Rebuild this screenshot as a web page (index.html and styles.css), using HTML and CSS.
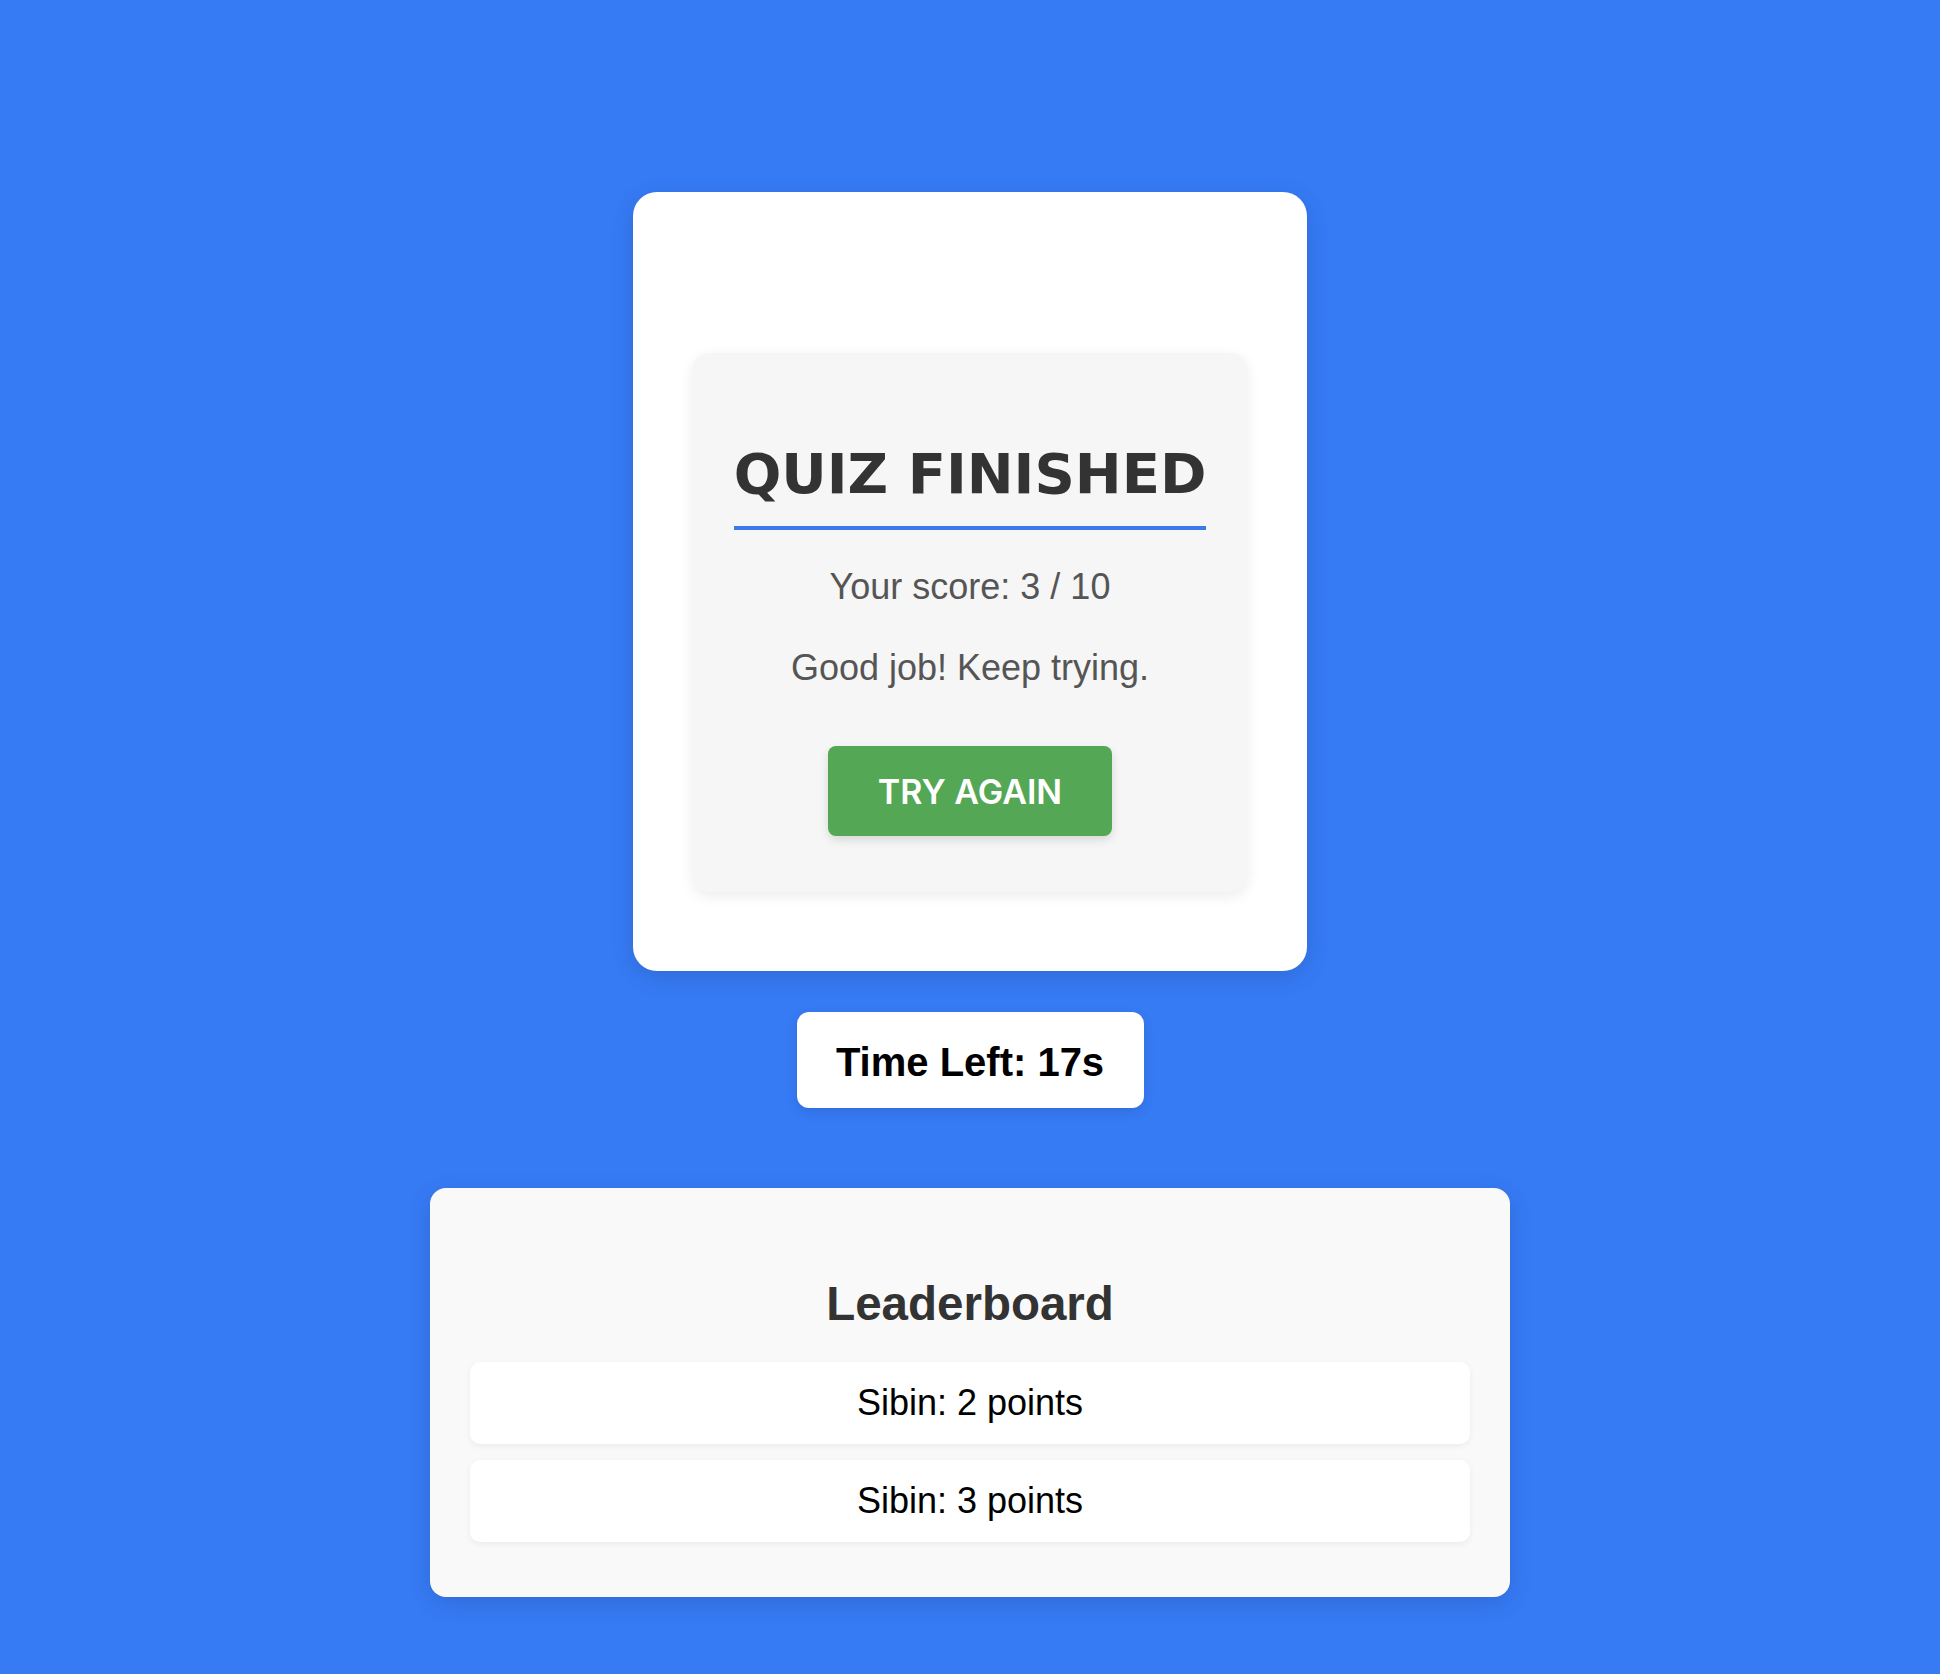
FILE: index.html
```html
<!DOCTYPE html>
<html lang="en">
<head>
<meta charset="utf-8">
<title>Quiz</title>
<link rel="stylesheet" href="styles.css">
</head>
<body>
<main class="page">
  <section class="quiz-card">
    <div class="result">
      <h2 class="result-title">QUIZ FINISHED</h2>
      <p class="score">Your score: 3 / 10</p>
      <p class="message">Good job! Keep trying.</p>
      <button class="retry" type="button">TRY AGAIN</button>
    </div>
  </section>
  <div class="timer">Time Left: 17s</div>
  <section class="leaderboard">
    <h2 class="leaderboard-title">Leaderboard</h2>
    <ul class="entries">
      <li class="entry">Sibin: 2 points</li>
      <li class="entry">Sibin: 3 points</li>
    </ul>
  </section>
</main>
</body>
</html>
```
FILE: styles.css
```css
html, body {
  margin: 0;
  padding: 0;
}
body {
  background: #367af4;
  font-family: "Liberation Sans", Arial, sans-serif;
  min-height: 1674px;
}
.page {
  display: flex;
  flex-direction: column;
  align-items: center;
  padding-top: 192px;
}
.quiz-card {
  box-sizing: border-box;
  width: 674px;
  background: #ffffff;
  border-radius: 24px;
  padding: 161px 60px 79px;
  box-shadow: 0 6px 24px rgba(0, 0, 0, 0.12);
}
.result {
  display: flex;
  flex-direction: column;
  align-items: center;
  background: #f6f6f6;
  border-radius: 16px;
  padding: 88px 20px 56px;
  box-shadow: 0 4px 14px rgba(0, 0, 0, 0.08);
}
.result-title {
  margin: 0;
  font-family: "DejaVu Sans", Verdana, sans-serif;
  font-weight: bold;
  font-size: 56px;
  color: #333333;
  padding-bottom: 20px;
  border-bottom: 4px solid #3a7aea;
}
.score, .message {
  margin: 0;
  font-size: 36px;
  color: #555555;
  line-height: 41px;
}
.score {
  margin-top: 35.5px;
}
.message {
  margin-top: 40px;
}
.retry {
  margin-top: 58.5px;
  height: 90px;
  width: 284px;
  border: none;
  border-radius: 8px;
  background: #54a754;
  color: #ffffff;
  font-family: Inter, "Liberation Sans", sans-serif;
  font-weight: 600;
  font-size: 34px;
  box-shadow: 0 4px 10px rgba(0, 0, 0, 0.12);
  cursor: pointer;
}
.timer {
  box-sizing: border-box;
  margin-top: 41px;
  width: 347px;
  height: 96px;
  padding-top: 4px;
  display: flex;
  align-items: center;
  justify-content: center;
  background: #ffffff;
  border-radius: 12px;
  font-weight: bold;
  font-size: 40px;
  color: #000000;
  box-shadow: 0 4px 12px rgba(0, 0, 0, 0.1);
}
.leaderboard {
  box-sizing: border-box;
  margin-top: 80px;
  width: 1080px;
  background: #f9f9f9;
  border-radius: 16px;
  padding: 88px 40px 55px;
  box-shadow: 0 6px 24px rgba(0, 0, 0, 0.12);
}
.leaderboard-title {
  margin: 0 0 31px;
  text-align: center;
  font-weight: bold;
  font-size: 47.5px;
  color: #333333;
  line-height: normal;
}
.entries {
  list-style: none;
  margin: 0;
  padding: 0;
  display: flex;
  flex-direction: column;
  gap: 16px;
}
.entry {
  background: #ffffff;
  border-radius: 10px;
  height: 82px;
  display: flex;
  align-items: center;
  justify-content: center;
  font-size: 36px;
  color: #000000;
  box-shadow: 0 2px 6px rgba(0, 0, 0, 0.06);
}
```
